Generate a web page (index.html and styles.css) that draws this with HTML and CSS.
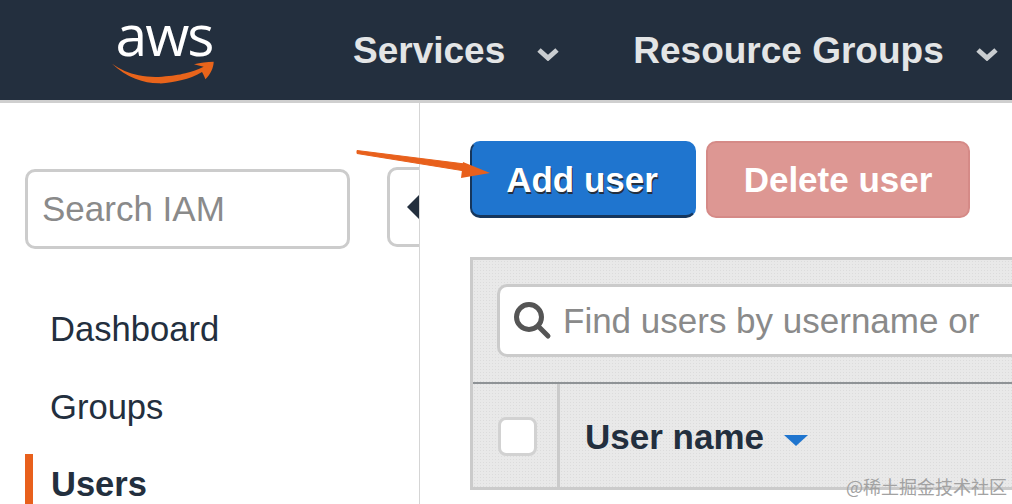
FILE: index.html
```html
<!DOCTYPE html>
<html lang="en">
<head>
<meta charset="utf-8">
<title>IAM Users</title>
<link rel="stylesheet" href="styles.css">
</head>
<body>
<header class="topbar">
  <div class="logo">
    <span class="logo-text">aws</span>
    <svg class="smile" width="104" height="24" viewBox="100 175 312 72"><path d="M100 183C125 200 150 212 180 218C205 223 230 224 250 222C280 220 300 217 320 212C340 207 358 200 375 192C365 190 355 187 346 185C365 180 385 177 405 177C405 195 395 215 380 230C378 223 374 215 370 208C350 220 330 228 310 232C285 238 262 243 240 242C215 242 195 237 170 228C145 218 120 202 100 183Z" fill="#e8641b"/></svg>
  </div>
  <nav class="nav">
    <span class="nav-item services">Services</span>
    <svg class="caret" width="22" height="14" viewBox="0 0 22 14"><path d="M2 3L11 11L20 3" fill="none" stroke="#c9cdd0" stroke-width="5"/></svg>
    <span class="nav-item groups">Resource Groups</span>
    <svg class="caret" width="22" height="14" viewBox="0 0 22 14"><path d="M2 3L11 11L20 3" fill="none" stroke="#c9cdd0" stroke-width="5"/></svg>
  </nav>
</header>
<div class="content">
  <aside class="sidebar">
    <div class="side-search-row">
      <div class="side-search">Search IAM</div>
      <div class="collapse"><span class="collapse-tri"></span></div>
    </div>
    <ul class="side-menu">
      <li class="side-link">Dashboard</li>
      <li class="side-link">Groups</li>
      <li class="side-link active">Users</li>
    </ul>
  </aside>
  <main class="main">
    <div class="actions">
      <button class="btn primary">Add user</button>
      <button class="btn danger">Delete user</button>
    </div>
    <section class="panel">
      <div class="filter">
        <div class="filter-box">
          <svg class="mag" width="38" height="38" viewBox="0 0 38 38"><circle cx="15" cy="15" r="12.5" fill="none" stroke="#555" stroke-width="5"/><path d="M24 24L34 34" stroke="#555" stroke-width="5" stroke-linecap="round"/></svg>
          <span class="filter-text">Find users by username or</span>
        </div>
      </div>
      <div class="thead">
        <div class="check-cell"><span class="check"></span></div>
        <div class="name-cell"><span class="name-label">User name</span><span class="sort"></span></div>
      </div>
    </section>
  </main>
</div>
<svg class="arrow" width="140" height="44" viewBox="0 0 140 44"><path d="M2 4.500L2 7.500L110 25L110 18Z" fill="#e8601c" stroke="#e8601c" stroke-width="1" stroke-linejoin="round"/><path d="M108 16L135 27L106 32Z" fill="#e8601c"/></svg>
<span class="watermark">@稀土掘金技术社区</span>
</body>
</html>
```
FILE: styles.css
```css
* { box-sizing: border-box; }
html, body { margin: 0; padding: 0; height: 504px; overflow: hidden; }
body { position: relative; width: 1012px; background: #fff; font-family: "Liberation Sans", Arial, sans-serif; color: #232f3e; }

.topbar { height: 103px; background: #232f3e; border-bottom: 3px solid #cfcfcf; display: flex; align-items: center; padding-left: 112px; }
.logo { width: 104px; display: flex; flex-direction: column; align-items: center; flex: none; margin-top: -8px; }
.logo-text { height: 78px; margin: -12px 0; font-family: "Open Sans", "Liberation Sans", sans-serif; font-size: 57px; font-weight: 500; line-height: 78px; color: #fff; letter-spacing: -2px; }
.smile { margin-top: 0; flex: none; }
.nav { display: flex; align-items: center; margin-left: 137px; margin-top: 2px; white-space: nowrap; }
.nav-item { font-size: 37px; font-weight: 700; color: #e3e5e6; }
.caret { margin-left: 32px; margin-top: 6px; flex: none; }
.nav .groups { margin-left: 74px; }

.content { display: flex; height: 401px; }
.sidebar { width: 420px; flex: none; border-right: 1px solid #d5d5d5; padding: 66px 0 0 25px; }
.side-search-row { display: flex; }
.side-search { width: 325px; height: 80px; border: 3px solid #ccc; border-radius: 10px; font-size: 35px; line-height: 74px; padding-left: 14px; color: #8a8a8a; flex: none; }
.collapse { width: 32px; height: 80px; margin: -2px 0 0 37px; border: 3px solid #ccc; border-right: 0; border-radius: 10px 0 0 10px; display: flex; align-items: center; justify-content: flex-end; flex: none; }
.collapse-tri { width: 0; height: 0; border: 12px solid transparent; border-left: 0; border-right: 12px solid #232f3e; }
.side-menu { list-style: none; margin: 41px 0 0; padding: 0; }
.side-link { height: 78px; font-size: 34.6px; line-height: 78px; padding-left: 25px; }
.side-link.active { font-size: 34.5px; font-weight: 700; border-left: 8px solid #e8601c; padding-left: 18px; margin-top: 8px; height: 60px; line-height: 60px; }

.main { flex: 1; min-width: 0; padding: 38px 0 0 50px; }
.actions { display: flex; gap: 10px; }
.btn { height: 77px; border-radius: 10px; font-family: inherit; font-size: 35px; font-weight: 700; color: #fff; padding: 2px 2px 0 0; }
.primary { width: 226px; background: #1f75cf; border: 2px solid #1f75cf; border-left-color: #16365c; border-bottom: 3px solid #16365c; text-shadow: 1px 2px 0 #232f3e; }
.danger { width: 264px; background: #dd9793; border: 2px solid #d58a87; padding: 0; }

.panel { margin-top: 39px; height: 233px; background: #e9e9e9; border: 3px solid #cbcbcb; border-right: 0; background-image: radial-gradient(#dcdcdc 0.6px, transparent 0.7px); background-size: 3px 3px; }
.filter { height: 124px; padding: 24px 0 0 24px; border-bottom: 2px solid #8f9396; }
.filter-box { height: 73px; background: #fff; border: 3px solid #cbcbcb; border-right: 0; border-radius: 10px 0 0 10px; display: flex; align-items: center; padding-left: 14px; overflow: hidden; }
.mag { flex: none; }
.filter-text { font-size: 35px; color: #8a8a8a; margin-left: 11px; white-space: nowrap; padding-top: 1px; }
.thead { display: flex; height: 104px; }
.check-cell { width: 87px; flex: none; border-right: 3px solid #cbcbcb; padding: 33px 0 0 25px; }
.check { display: block; width: 39px; height: 39px; background: #fff; border: 3px solid #d2d2d2; border-radius: 8px; }
.name-cell { flex: 1; display: flex; align-items: center; padding: 0 0 0 25px; margin-top: 2px; }
.name-label { font-size: 35px; font-weight: 700; }
.sort { width: 0; height: 0; margin: 6px 0 0 20px; border: 12px solid transparent; border-bottom: 0; border-top: 11px solid #1f75cf; }

.arrow { position: absolute; left: 355px; top: 146px; }
.watermark { position: absolute; left: 846px; top: 475px; font-family: "Noto Sans CJK SC", sans-serif; font-size: 18px; line-height: 22px; color: #a2a2a2; white-space: nowrap; }
```
